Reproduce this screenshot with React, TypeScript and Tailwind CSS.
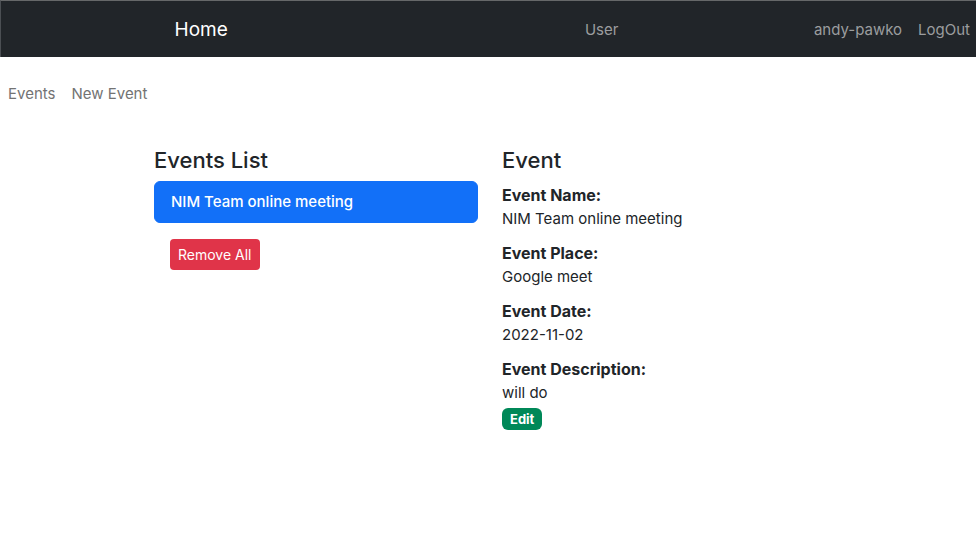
import React from "react";

const details = [
  { label: "Event Name:", value: "NIM Team online meeting" },
  { label: "Event Place:", value: "Google meet" },
  { label: "Event Date:", value: "2022-11-02" },
  { label: "Event Description:", value: "will do" },
];

export default function App() {
  return (
    <div className="min-h-screen bg-white font-['Inter','Liberation_Sans',sans-serif] text-[15px] leading-6 text-[#212529]">
      <nav className="flex h-[57px] items-center border-t border-l border-t-[#666869] border-l-[#4b4f53] bg-[#212529] pt-0.5 text-[#9b9d9f]">
        <div className="grid flex-1 grid-cols-2 items-center">
          <a href="#home" className="justify-self-center text-[19px] leading-8 text-white">Home</a>
          <a href="#user" className="justify-self-center">User</a>
        </div>
        <div className="flex gap-4 pr-1.5 pl-3">
          <a href="#profile">andy-pawko</a>
          <a href="#logout">LogOut</a>
        </div>
      </nav>
      <nav className="flex gap-4 px-2 pt-[25px] text-[#737373]">
        <a href="#events">Events</a>
        <a href="#new">New Event</a>
      </nav>
      <main className="pt-10 pl-1">
        <div className="mx-auto grid max-w-[696px] grid-cols-2 gap-6 px-3">
          <section>
            <h4 className="mb-[7px] text-[22px] leading-7 font-medium">Events List</h4>
            <ul>
              <li className="rounded-md border border-[#1270f8] bg-[#1270f8] px-4 py-2 font-medium text-white">
                NIM Team online meeting
              </li>
            </ul>
            <button className="m-4 h-[31px] rounded bg-[#e03449] px-2 text-sm text-white">Remove All</button>
          </section>
          <section>
            <h4 className="mb-[7px] text-[22px] leading-7 font-medium">Event</h4>
            <dl className="flex flex-col gap-2.5 pt-0.5">
              {details.map((d) => (
                <div key={d.label}>
                  <dt className="text-base leading-6 font-bold">{d.label}</dt>
                  <dd>{d.value}</dd>
                </div>
              ))}
            </dl>
            <button className="mt-[3px] block h-[22px] rounded-md bg-[#008858] px-2 text-[13px] leading-5 font-bold text-white">
              Edit
            </button>
          </section>
        </div>
      </main>
    </div>
  );
}
